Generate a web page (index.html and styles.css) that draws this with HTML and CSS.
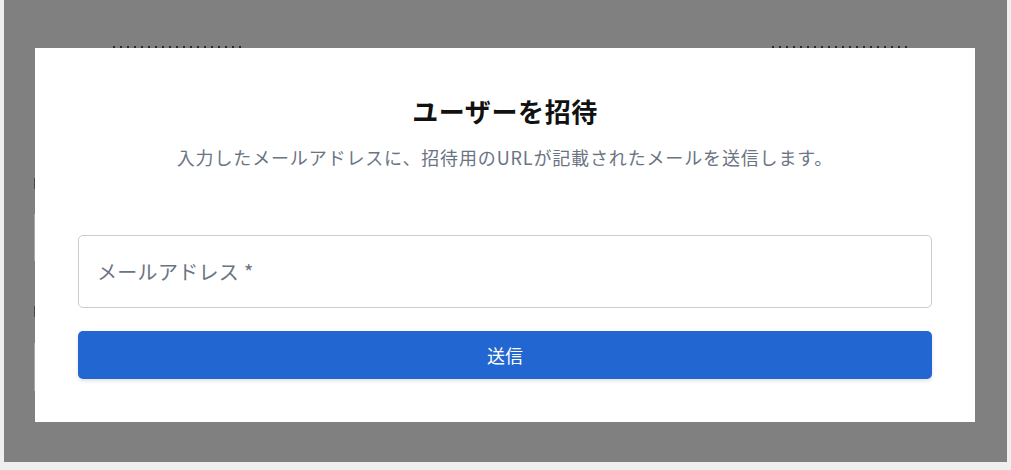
FILE: index.html
```html
<!DOCTYPE html>
<html lang="ja">
<head>
<meta charset="utf-8">
<title>ユーザーを招待</title>
<link rel="stylesheet" href="styles.css">
</head>
<body>
<div class="backdrop">
  <div class="ghost ghost-left"></div>
  <div class="ghost ghost-right"></div>
  <div class="edge-marks">
    <span class="mark dark m1"></span>
    <span class="mark light m2"></span>
    <span class="mark dark m3"></span>
    <span class="mark light m4"></span>
  </div>
  <div class="modal">
    <h1 class="title">ユーザーを招待</h1>
    <p class="subtitle">入力したメールアドレスに、招待用のURLが記載されたメールを送信します。</p>
    <div class="field">
      <input class="input" type="email" placeholder="メールアドレス *">
    </div>
    <button class="submit" type="button">送信</button>
  </div>
</div>
</body>
</html>
```

FILE: styles.css
```css
* { box-sizing: border-box; }

html, body {
  margin: 0;
  padding: 0;
}

body {
  width: 1011px;
  height: 470px;
  background: #efefef;
  font-family: "Noto Sans CJK JP", "Noto Sans", sans-serif;
  overflow: hidden;
}

.backdrop {
  position: relative;
  margin-left: 4px;
  width: 1003px;
  height: 462px;
  background: #808080;
  display: flex;
  justify-content: center;
  align-items: flex-start;
  padding-top: 48px;
  padding-right: 1px;
}

.ghost {
  position: absolute;
  top: 46px;
  height: 2px;
  background-image: repeating-linear-gradient(90deg, #2a2a2a 0 2px, transparent 2px 7px);
}
.ghost-left { left: 109px; width: 128px; }
.ghost-right { left: 768px; width: 136px; }

.edge-marks {
  position: absolute;
  left: 30px;
  top: 0;
  width: 1px;
  height: 462px;
}
.mark { position: absolute; left: 0; width: 1px; }
.mark.dark { background: #4a4a4a; }
.mark.light { background: #a8a8a8; }
.m1 { top: 178px; height: 11px; }
.m2 { top: 214px; height: 47px; }
.m3 { top: 306px; height: 11px; }
.m4 { top: 343px; height: 48px; }

.modal {
  position: relative;
  width: 940px;
  height: 374px;
  background: #ffffff;
  padding: 43px 43px 43px 43px;
  display: flex;
  flex-direction: column;
  align-items: stretch;
}

.title {
  margin: 0;
  font-size: 26px;
  line-height: 39px;
  font-weight: 700;
  color: #111111;
  text-align: center;
  letter-spacing: 0.6px;
}

.subtitle {
  margin: 13px 0 0;
  font-size: 18px;
  line-height: 28px;
  color: #6b7482;
  text-align: center;
  letter-spacing: 0.85px;
}

.field {
  margin-top: 64px;
}

.input {
  display: block;
  width: 100%;
  height: 73px;
  border: 1px solid #cccccc;
  border-radius: 5px;
  padding: 0 18px;
  font-family: inherit;
  font-size: 20px;
  color: #333;
  background: #fff;
  outline: none;
  letter-spacing: 0.3px;
}
.input::placeholder {
  color: #6b7482;
  opacity: 1;
}

.submit {
  margin-top: 23px;
  height: 48px;
  width: 100%;
  border: none;
  border-radius: 5px;
  background: #2166d1;
  color: #ffffff;
  font-family: inherit;
  font-size: 18px;
  box-shadow: 0 2px 4px rgba(0, 0, 0, 0.12);
  cursor: pointer;
}
```
